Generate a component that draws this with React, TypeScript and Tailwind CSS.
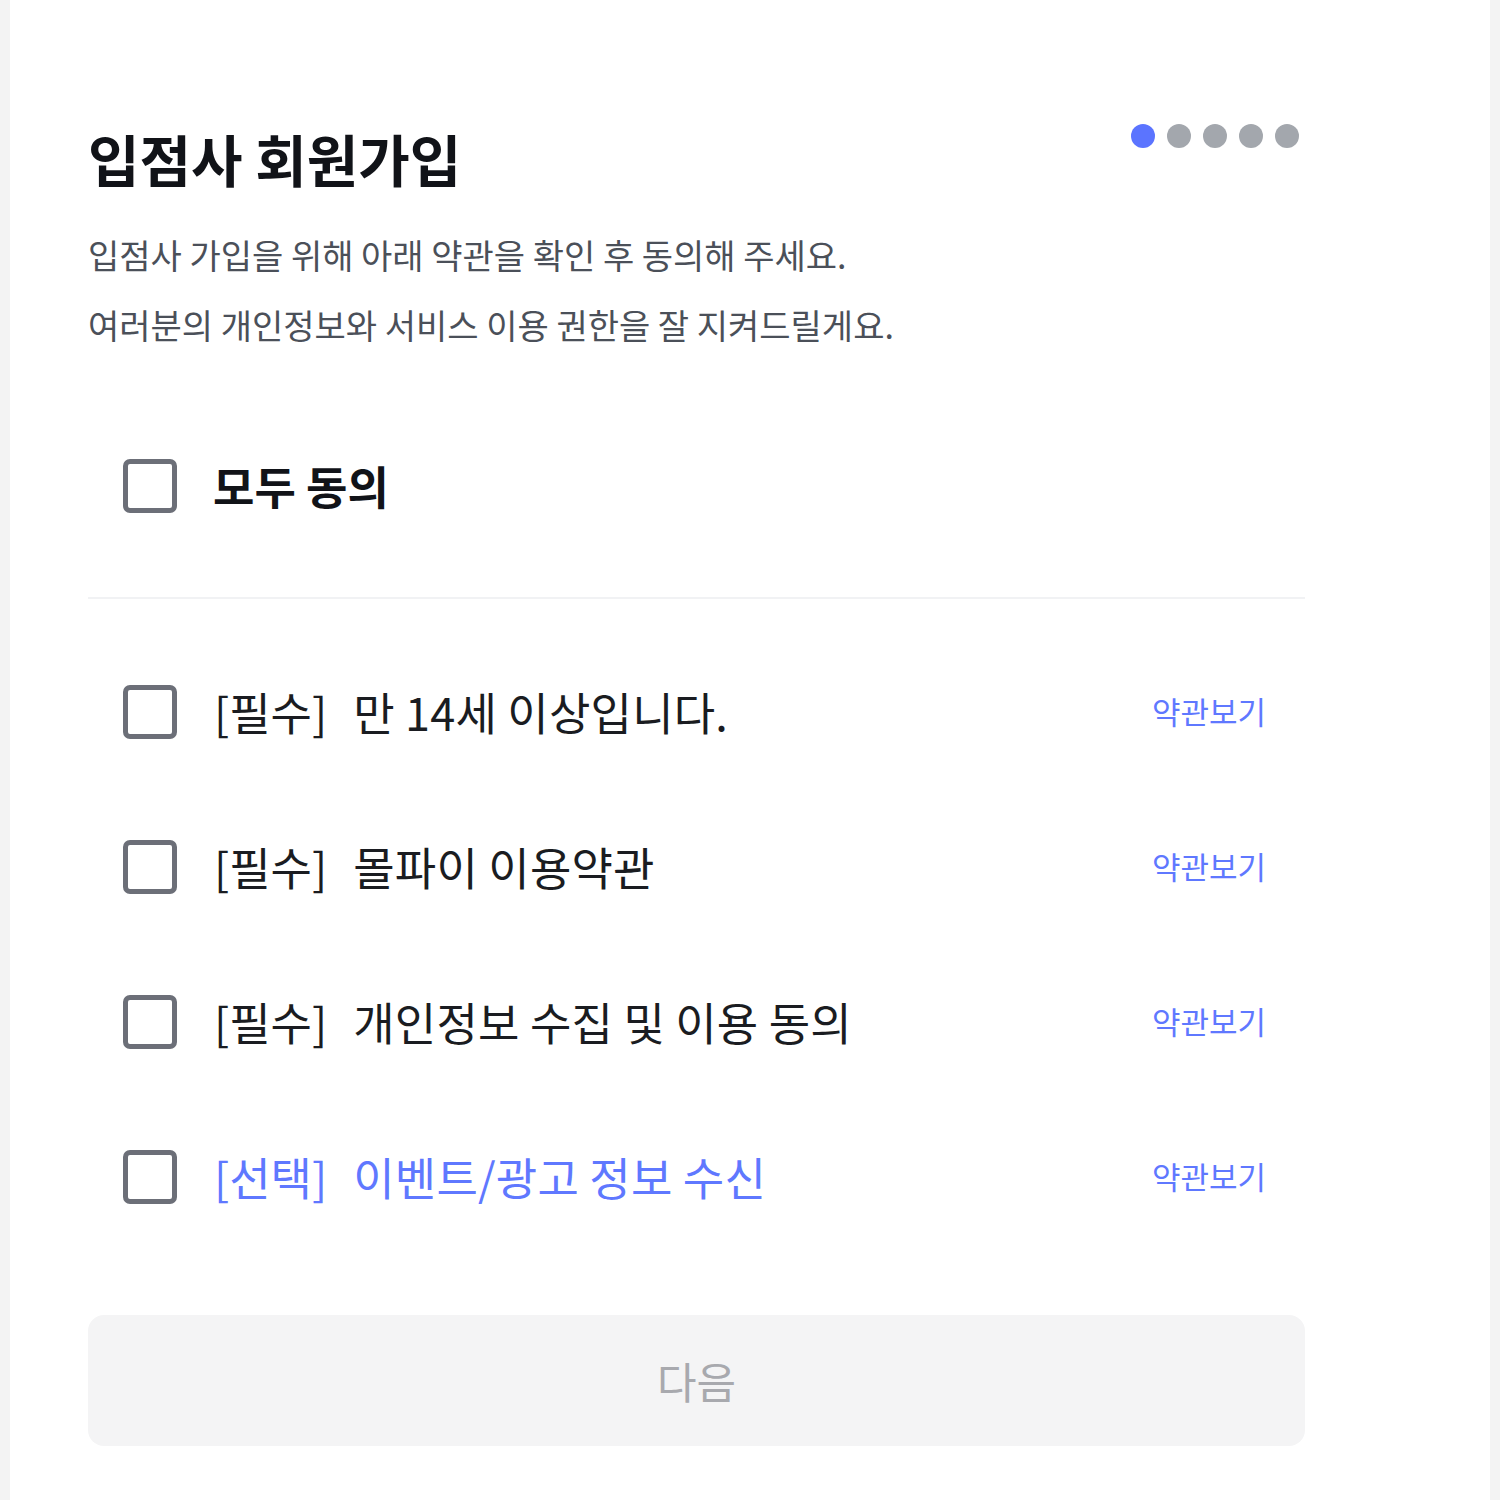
import React from "react";

const font = { fontFamily: '"Noto Sans CJK KR", "Noto Sans", sans-serif' };

function Box() {
  return <div className="w-[54px] h-[54px] shrink-0 rounded-[7px] border-[5px] border-[#6c6f78] bg-white" />;
}

const items = [
  { tag: "[필수]", text: "만 14세 이상입니다.", opt: false },
  { tag: "[필수]", text: "몰파이 이용약관", opt: false },
  { tag: "[필수]", text: "개인정보 수집 및 이용 동의", opt: false },
  { tag: "[선택]", text: "이벤트/광고 정보 수신", opt: true },
];

export default function App() {
  return (
    <div className="w-[1500px] h-[1500px] flex bg-[#f3f3f3]" style={font}>
      <div className="ml-[10px] w-[1480px] h-full bg-white pl-[78px] pt-[119px]">
        <div className="w-[1217px]">
          <div className="flex justify-between items-start">
            <h1 className="text-[56px] leading-[78px] font-bold text-[#111318]">입점사 회원가입</h1>
            <div className="flex gap-[12px] pt-[5px] pr-[6px]">
              <span className="w-[24px] h-[24px] rounded-full bg-[#5b74ff]" />
              <span className="w-[24px] h-[24px] rounded-full bg-[#a3a7ad]" />
              <span className="w-[24px] h-[24px] rounded-full bg-[#a3a7ad]" />
              <span className="w-[24px] h-[24px] rounded-full bg-[#a3a7ad]" />
              <span className="w-[24px] h-[24px] rounded-full bg-[#a3a7ad]" />
            </div>
          </div>
          <div className="mt-[23px] text-[34px] leading-[70px] text-[#4b5059]">
            <p>입점사 가입을 위해 아래 약관을 확인 후 동의해 주세요.</p>
            <p>여러분의 개인정보와 서비스 이용 권한을 잘 지켜드릴게요.</p>
          </div>
          <div className="mt-[99px] pl-[35px] flex items-center gap-[36px] h-[54px]">
            <Box />
            <span className="text-[45px] font-bold text-[#111318]">모두 동의</span>
          </div>
          <div className="mt-[84px] h-[2px] bg-[#f1f2f4]" />
          <div className="mt-[35px]">
            {items.map((it, i) => (
              <div key={i} className="h-[155px] flex items-center pl-[35px] pr-[39px]">
                <Box />
                <span className={`ml-[37px] text-[45px] ${it.opt ? "text-[#5f78ff]" : "text-[#1a1c21]"}`}>{it.tag}</span>
                <span className={`ml-[26px] text-[45px] tracking-[0.2px] ${it.opt ? "text-[#5f78ff]" : "text-[#1a1c21]"}`}>{it.text}</span>
                <span className="ml-auto text-[31px] text-[#5f78ff]">약관보기</span>
              </div>
            ))}
          </div>
          <button className="mt-[61px] w-full h-[131px] rounded-[16px] bg-[#f4f4f5] text-[43px] text-[#a8a9ae]">다음</button>
        </div>
      </div>
    </div>
  );
}
